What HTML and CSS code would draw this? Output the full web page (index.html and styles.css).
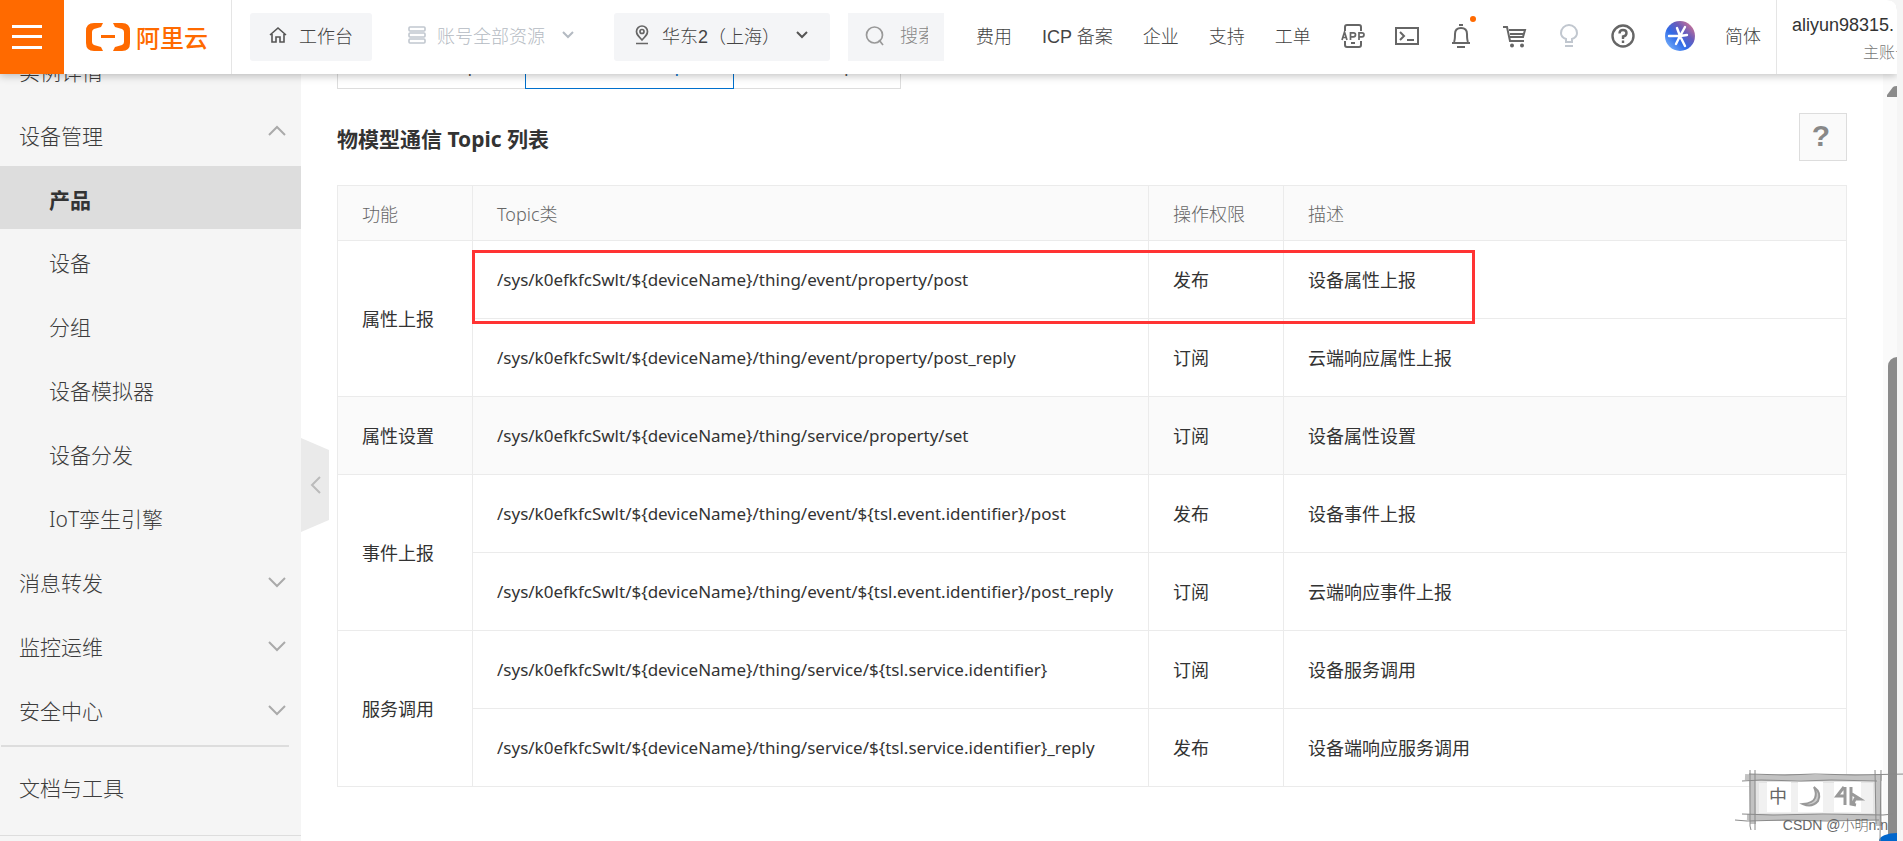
FILE: index.html
```html
<!DOCTYPE html>
<html lang="zh-CN">
<head>
<meta charset="utf-8">
<title>物模型通信 Topic 列表</title>
<link rel="stylesheet" href="styles.css">
</head>
<body>
<div class="frame">
<header class="topbar">
  <button class="burger" aria-label="菜单"><svg width="30" height="24" viewBox="0 0 30 24" fill="#fff"><path d="M0 0h30v3H0zM0 10h30v3H0zM0 21h30v3H0z"/></svg></button>
  <a class="logo" href="#"><svg width="44" height="28" viewBox="0 0 44 28" fill="#ff6a00"><path d="M17 0H8Q0 0 0 8v12q0 8 8 8h9l-2-4-7-2q-2-1-2-3V9q0-2 2-3l7-2zM27 0h9q8 0 8 8v12q0 8-8 8h-9l2-4 7-2q2-1 2-3V9q0-2-2-3l-7-2zM15 12h14v3H15z"/></svg><span>阿里云</span></a>
  <button class="pill workbench"><svg width="18" height="18" viewBox="0 0 18 18" fill="none" stroke="#555" stroke-width="1.6"><path d="M1 9L9 2l8 7M3 8v8h4v-5h4v5h4V8"/></svg>工作台</button>
  <button class="pill resources"><svg width="18" height="18" viewBox="0 0 18 18" fill="none" stroke="#c1c7cf" stroke-width="1.6"><rect x="1" y="1" width="16" height="4" rx="1"/><rect x="1" y="7" width="16" height="4" rx="1"/><rect x="1" y="13" width="16" height="4" rx="1"/></svg>账号全部资源<svg class="caret" width="12" height="8" viewBox="0 0 12 8" fill="none" stroke="#b4bac2" stroke-width="2"><path d="M1 1l5 5 5-5"/></svg></button>
  <button class="pill region"><svg width="16" height="20" viewBox="0 0 16 20" fill="none" stroke="#666" stroke-width="1.7"><path d="M8 15C4 11 2.500 9.500 2.500 6.500a5.500 5.500 0 0 1 11 0C13.500 9.500 12 11 8 15zM2 18.500h12"/><circle cx="8" cy="6.500" r="2"/></svg>华东2（上海）<svg class="caret" width="12" height="8" viewBox="0 0 12 8" fill="none" stroke="#555" stroke-width="2"><path d="M1 1l5 5 5-5"/></svg></button>
  <label class="search"><svg width="20" height="22" viewBox="0 0 20 22" fill="none" stroke="#999" stroke-width="1.700"><circle cx="9.500" cy="10" r="8"/><path d="M14 15l4 5"/></svg><input type="text" placeholder="搜索" aria-label="搜索"></label>
  <nav class="links">
    <a href="#">费用</a><a href="#">ICP 备案</a><a href="#">企业</a><a href="#">支持</a><a href="#">工单</a>
  </nav>
  <div class="tools">
    <button aria-label="APP"><svg width="24" height="24" viewBox="0 0 24 24" fill="none" stroke="#666" stroke-width="2"><path d="M4 7V3q0-2 2-2h12q2 0 2 2v4M4 17v4q0 2 2 2h12q2 0 2-2v-4M10 19h4"/><path stroke-width="1.700" d="M1 16l2.500-8L6 16M2 13.500h3M9.500 16V8.800h3q2 0 2 2t-2 2h-3M18 16V8.800h3q2 0 2 2t-2 2h-3"/></svg></button>
    <button aria-label="Cloud Shell"><svg width="24" height="18" viewBox="0 0 24 18" fill="none" stroke="#666" stroke-width="2"><path d="M1 1h22v16H1zM5 5l4 4-4 4M12 13h7"/></svg></button>
    <button class="bell" aria-label="消息"><svg width="20" height="24" viewBox="0 0 20 24" fill="none" stroke="#666" stroke-width="2"><path d="M8 1h4M1 19h18M3 18c1-2 1-4 1-8q0-6 6-6t6 6c0 4 0 6 1 8M6 23h8"/></svg></button>
    <button aria-label="购物车"><svg width="24" height="24" viewBox="0 0 24 24" fill="none" stroke="#666" stroke-width="2"><path d="M0 3h4l3 14h14M6 6h16l-2 7H7M7 10h13"/><circle cx="9" cy="21.500" r="1" /><circle cx="19" cy="21.500" r="1"/></svg></button>
    <button aria-label="提示"><svg width="18" height="24" viewBox="0 0 18 24" fill="none" stroke="#c1c7cf" stroke-width="2"><path d="M6 18v-3C3 14 1 12 1 9a8 8 0 0 1 16 0c0 3-2 5-5 6v3zM5 22h8"/></svg></button>
    <button aria-label="帮助"><svg width="24" height="24" viewBox="0 0 24 24" fill="none" stroke="#666" stroke-width="2.400"><circle cx="12" cy="12" r="10.500"/><path d="M8.500 9.500q0-3.500 3.500-3.500t3.500 3-3.500 3.500v2.500M12 16.500v2.500"/></svg></button>
    <button aria-label="AI 助手"><svg width="30" height="30" viewBox="0 0 30 30"><defs><linearGradient id="ai" x1="0" y1="1" x2="1" y2="0"><stop offset="0" stop-color="#8cc4ff"/><stop offset=".4" stop-color="#2f6be8"/><stop offset=".65" stop-color="#6a5cba"/><stop offset="1" stop-color="#f57c86"/></linearGradient></defs><circle cx="15" cy="15" r="15" fill="url(#ai)"/><path d="M4 15h11l5-9M12 7l3 8 5 10M15 15l-4 8M15 15l7-1" fill="none" stroke="#fff" stroke-width="2.400" stroke-linecap="round"/></svg></button>
  </div>
  <a class="lang" href="#">简体</a>
  <div class="account"><span class="name">aliyun98315.</span><span class="role">主账号</span></div>
</header>
<div class="body">
  <aside class="sidebar">
    <nav>
      <a class="item" href="#">实例详情</a>
      <a class="item" href="#">设备管理<svg class="chev up" width="18" height="11" viewBox="0 0 18 11"><path d="M1 10l8-8 8 8"/></svg></a>
      <a class="item sub active" href="#">产品</a>
      <a class="item sub" href="#">设备</a>
      <a class="item sub" href="#">分组</a>
      <a class="item sub" href="#">设备模拟器</a>
      <a class="item sub" href="#">设备分发</a>
      <a class="item sub" href="#">IoT孪生引擎</a>
      <a class="item" href="#">消息转发<svg class="chev" width="18" height="11" viewBox="0 0 18 11"><path d="M1 1l8 8 8-8"/></svg></a>
      <a class="item" href="#">监控运维<svg class="chev" width="18" height="11" viewBox="0 0 18 11"><path d="M1 1l8 8 8-8"/></svg></a>
      <a class="item" href="#">安全中心<svg class="chev" width="18" height="11" viewBox="0 0 18 11"><path d="M1 1l8 8 8-8"/></svg></a>
    </nav>
    <hr class="divider">
    <a class="item docs" href="#">文档与工具</a>
    <button class="collapse" aria-label="收起"><svg width="11" height="18" viewBox="0 0 11 18" fill="none" stroke="#bbb" stroke-width="2"><path d="M10 1L2 9l8 8"/></svg></button>
  </aside>
  <main class="content">
    <div class="tabs"><button>基础通信 Topic</button><button class="on">物模型通信 Topic</button><button>自定义 Topic</button></div>
    <div class="title"><h1>物模型通信 Topic 列表</h1><button class="help" aria-label="帮助">?</button></div>
    <div class="tablewrap">
    <table>
      <colgroup><col class="c1"><col class="c2"><col class="c3"><col></colgroup>
      <thead><tr><th>功能</th><th>Topic类</th><th>操作权限</th><th>描述</th></tr></thead>
      <tbody>
        <tr><td rowspan="2">属性上报</td><td class="topic">/sys/k0efkfcSwlt/${deviceName}/thing/event/property/post</td><td>发布</td><td>设备属性上报</td></tr>
        <tr><td class="topic">/sys/k0efkfcSwlt/${deviceName}/thing/event/property/post_reply</td><td>订阅</td><td>云端响应属性上报</td></tr>
        <tr class="alt"><td>属性设置</td><td class="topic">/sys/k0efkfcSwlt/${deviceName}/thing/service/property/set</td><td>订阅</td><td>设备属性设置</td></tr>
        <tr><td rowspan="2">事件上报</td><td class="topic">/sys/k0efkfcSwlt/${deviceName}/thing/event/${tsl.event.identifier}/post</td><td>发布</td><td>设备事件上报</td></tr>
        <tr><td class="topic">/sys/k0efkfcSwlt/${deviceName}/thing/event/${tsl.event.identifier}/post_reply</td><td>订阅</td><td>云端响应事件上报</td></tr>
        <tr><td rowspan="2">服务调用</td><td class="topic">/sys/k0efkfcSwlt/${deviceName}/thing/service/${tsl.service.identifier}</td><td>订阅</td><td>设备服务调用</td></tr>
        <tr><td class="topic">/sys/k0efkfcSwlt/${deviceName}/thing/service/${tsl.service.identifier}_reply</td><td>发布</td><td>设备端响应服务调用</td></tr>
      </tbody>
    </table>
    <div class="mark"></div>
    </div>
  </main>
  <div class="scroll"><svg width="10" height="11" viewBox="0 0 10 11"><path d="M0 11V9l6-8q1-1 4-1v11z" fill="#8b8b8b"/></svg><div class="thumb"></div></div>
</div>
</div>
<div class="bubble"></div>
<div class="ime">
  <svg width="172" height="71" viewBox="0 0 172 71" fill="none">
    <path d="M18 8h126v40H18z" fill="#e4e4e4"/>
    <path d="M24 13h114v30H24z" fill="#f1f1f1"/>
    <path d="M32 12h24v30H32zM63 12h25v30H63zM99 12h27v30H99z" fill="#fff"/>
    <path d="M10 7l20 1 25-1 30 1 30-1 32 1M12 47l34 1 30-1 30 1 36-1M17 4l1 50M143 4l1 52" stroke="#c2c2c2" stroke-width="6"/>
    <path d="M7 11l19-1 40 1 30-1 46 1M14 4l36 1 30-1 40 1 51-1M0 50l12 1 40-1 40 1 52-1M7 44l31 1 50-1 60 1 10-1M15 0v56l1 4M20 0v60M140 0l1 54M146 0l-1 71" stroke="#8a8a8a"/>
    <path d="M79 17q8 6 4 14-6 7-15 3 10-1 12-6 2-5-1-11z" stroke="#999" stroke-width="2" fill="#ccc"/>
    <path d="M109 17l-7 9h9M110 17v18M116 17v17l5 1M117 24l8 5h-5l-2 5" stroke="#999" stroke-width="3"/>
  </svg>
  <span class="zhong">中</span>
  <span class="csdn">CSDN @小明n.n</span>
</div>
</body>
</html>
```
FILE: styles.css
```css
* { box-sizing: border-box; }
body {
  margin: 0;
  height: 100vh;
  overflow: hidden;
  background: #f5f5f5;
  font-family: "Noto Sans", "Noto Sans CJK SC", sans-serif;
  font-size: 18px;
  color: #333;
}
button { border: 0; padding: 0; background: none; font: inherit; color: inherit; }
a { color: inherit; text-decoration: none; }
svg { display: block; flex: none; }

.frame {
  margin-right: 6px;
  height: 100vh;
  display: flex;
  flex-direction: column;
  background: #fff;
  border-top-right-radius: 10px;
  overflow: hidden;
}

.topbar {
  position: relative;
  z-index: 2;
  flex: none;
  display: flex;
  align-items: center;
  height: 74px;
  background: #fff;
  box-shadow: 0 2px 8px rgba(0, 0, 0, .24);
  font-family: "Liberation Sans", "Noto Sans CJK SC", sans-serif;
  font-weight: 300;
  color: #444;
  white-space: nowrap;
}
.burger { width: 64px; height: 74px; padding-left: 12px; background: #ff6a00; }
.logo {
  display: flex;
  align-items: center;
  gap: 6px;
  width: 168px;
  height: 74px;
  padding-left: 22px;
  border-right: 1px solid #e5e5e5;
  color: #ff6a00;
  font-size: 24px;
  font-weight: 500;
}
.logo span { padding-bottom: 2px; }
.pill { display: flex; align-items: center; height: 48px; padding-bottom: 4px; border-radius: 3px; background: #f4f5f7; }
.workbench { width: 122px; margin-left: 18px; padding-left: 19px; gap: 12px; }
.resources { margin-left: 18px; padding-left: 18px; padding-right: 16px; gap: 11px; background: none; color: #b4bac2; }
.caret { margin-left: 6px; }
.region { width: 216px; margin-left: 24px; padding-left: 20px; padding-right: 22px; gap: 12px; }
.region .caret { margin-left: auto; }
.search { display: flex; align-items: center; width: 96px; height: 48px; margin-left: 18px; padding: 0 16px 2px 17px; gap: 15px; background: #f4f5f7; }
.search input { width: 28px; border: 0; padding: 0; background: none; font: inherit; outline: none; }
.search input::placeholder { color: #888; opacity: 1; }
.links { display: flex; gap: 30px; margin-left: 32px; padding-bottom: 4px; }
.tools { display: flex; align-items: center; gap: 30px; margin-left: 30px; padding-bottom: 3px; }
.tools button { display: flex; justify-content: center; min-width: 24px; }
.bell { position: relative; }
.bell::after { content: ""; position: absolute; top: -8px; right: -3px; width: 6px; height: 6px; border-radius: 3px; background: #ff6a00; }
.lang { margin-left: auto; padding: 0 15px 4px; }
.account { width: 121px; height: 74px; padding: 14px 0 0 15px; border-left: 1px solid #e5e5e5; overflow: hidden; }
.account span { display: block; line-height: 22px; }
.name { color: #333; font-weight: 400; }
.role { margin: 6px 0 0 71px; color: #777; font-size: 16px; }

.body { flex: 1; display: flex; min-height: 0; }
.sidebar { position: relative; flex: none; width: 301px; background: #f5f5f5; color: #3c3c3c; }
.sidebar nav { margin: -36px 0 0; }
.item { display: flex; align-items: center; justify-content: space-between; height: 64px; padding: 2px 15px 0 19px; font-size: 21px; font-weight: 300; white-space: nowrap; }
.sub { padding-left: 49px; }
.active { height: 63px; background: #ddd; color: #333; font-weight: 700; }
.chev { fill: none; stroke: #aaa; stroke-width: 2; }
.up { margin-bottom: 10px; }
.divider { height: 2px; margin: 4px 12px 0 1px; border: 0; background: #ddd; }
.docs { height: 89px; padding-top: 0; padding-bottom: 8px; border-bottom: 1px solid #ddd; }
.collapse {
  position: absolute;
  top: 364px;
  left: 100%;
  display: flex;
  align-items: center;
  justify-content: center;
  width: 28px;
  height: 94px;
  background: #eaeaea;
  clip-path: polygon(0 0, 100% 12px, 100% 82px, 0 100%);
}

.content { flex: 1; min-width: 0; padding: 0 36px; }
.tabs { display: flex; height: 42px; margin-top: -27px; }
.tabs button { width: 188px; padding-bottom: 6px; border: 1px solid #ddd; border-right: 0; line-height: 24px; color: #555; }
.tabs button:last-child { width: 167px; border-left: 0; border-right: 1px solid #ddd; }
.tabs .on { width: 209px; border: 1px solid #0070cc; color: #0070cc; }
.title { display: flex; justify-content: space-between; align-items: center; margin: 24px 0; height: 48px; }
h1 { margin: 0; padding-top: 3px; font-size: 21px; line-height: 30px; font-weight: 700; }
.help { width: 48px; height: 48px; padding: 0 4px 2px 0; border: 1px solid #ddd; background: #fafafa; color: #888; font: 700 30px "Liberation Sans", sans-serif; }
.tablewrap { position: relative; }
table { width: 100%; table-layout: fixed; border-collapse: collapse; }
.c1, .c3 { width: 135px; }
.c2 { width: 676px; }
th, td { border: 1px solid #ebebeb; padding: 1px 24px 0; text-align: left; font-weight: 400; line-height: 24px; white-space: nowrap; }
th { height: 55px; background: #fafafa; color: #666; font-weight: 300; }
td { height: 78px; }
.alt { background: #fafafa; }
.topic { font-size: 17px; }
.mark { position: absolute; top: 65px; left: 135px; width: 1003px; height: 74px; border: 3px solid #f33; }

.scroll { flex: none; display: flex; flex-direction: column; align-items: flex-end; width: 14px; padding-top: 12px; background: #fafafa; }
.thumb { flex: 1; width: 9px; margin-top: 260px; border-top-left-radius: 9px; background: #8b8b8b; }

.ime { position: absolute; right: 0; bottom: 0; width: 168px; height: 71px; z-index: 3; }
.zhong { position: absolute; left: 34px; top: 13px; font-size: 18px; line-height: 26px; color: #666; }
.csdn { position: absolute; right: 15px; bottom: 6px; font: 300 14px/20px "Liberation Sans", "Noto Sans CJK SC", sans-serif; color: #666; white-space: nowrap; }
.bubble { position: absolute; right: 6px; bottom: 0; width: 18px; height: 8px; border-top-left-radius: 18px 8px; background: #06c; }
```
